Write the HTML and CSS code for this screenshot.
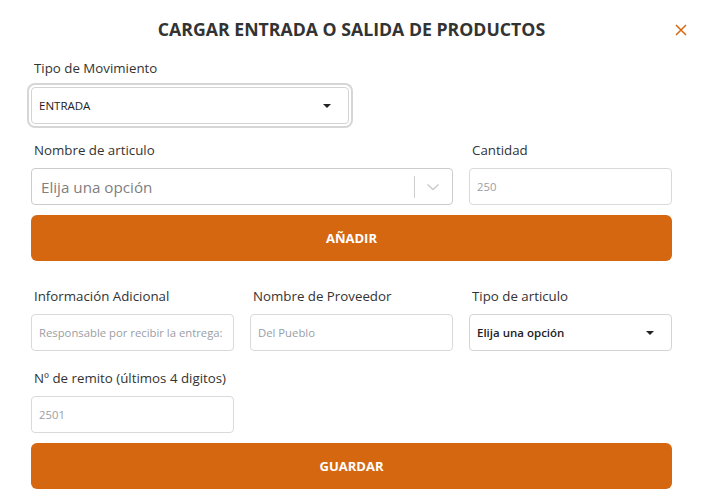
FILE: index.html
```html
<!DOCTYPE html>
<html lang="es">
<head>
    <meta charset="UTF-8">
    <meta name="viewport" content="width=device-width, initial-scale=1.0">
    <title>Cargar movimiento</title>
    <link rel="stylesheet" href="styles.css">
</head>
<body>
    <main class="modal">
        <header class="modal-header">
            <h2>CARGAR ENTRADA O SALIDA DE PRODUCTOS</h2>
            <button class="close" type="button" aria-label="Cerrar">
                <svg width="12" height="12" viewBox="0 0 12 12">
                    <path d="M1 1 L11 11 M11 1 L1 11" stroke="#d56711" stroke-width="1.5" fill="none"/>
                </svg>
            </button>
        </header>

        <form class="form">
            <div class="field mov">
                <label>Tipo de Movimiento</label>
                <div class="select focus">
                    <span>ENTRADA</span>
                    <i class="caret"></i>
                </div>
            </div>

            <div class="grid top">
                <div class="field span-2">
                    <label>Nombre de articulo</label>
                    <div class="rselect">
                        <span class="rselect-ph">Elija una opción</span>
                        <span class="rselect-sep"></span>
                        <svg class="rselect-chev" width="20" height="20" viewBox="0 0 20 20">
                            <path d="M4.5 7.5 L10 12.5 L15.5 7.5" stroke="#cccccc" stroke-width="1.6" fill="none"/>
                        </svg>
                    </div>
                </div>
                <div class="field">
                    <label>Cantidad</label>
                    <input class="input" type="text" placeholder="250">
                </div>
            </div>

            <button class="btn" type="button">AÑADIR</button>

            <div class="grid bottom">
                <div class="field">
                    <label>Información Adicional</label>
                    <input class="input" type="text" placeholder="Responsable por recibir la entrega:">
                </div>
                <div class="field">
                    <label>Nombre de Proveedor</label>
                    <input class="input" type="text" placeholder="Del Pueblo">
                </div>
                <div class="field">
                    <label>Tipo de articulo</label>
                    <div class="select">
                        <span class="strong">Elija una opción</span>
                        <i class="caret"></i>
                    </div>
                </div>
                <div class="field">
                    <label>Nº de remito (últimos 4 digitos)</label>
                    <input class="input" type="text" placeholder="2501">
                </div>
            </div>

            <button class="btn" type="button">GUARDAR</button>
        </form>
    </main>
</body>
</html>
```

FILE: styles.css
```css
*{
    box-sizing: border-box;
}
body{
    margin: 0;
    background-color: #fff;
    font-family: "Open Sans", "Liberation Sans", sans-serif;
    color: #333;
}
.modal{
    width: 702px;
    padding: 0 30px 0 31px;
}
.modal-header{
    position: relative;
    height: 58px;
    display: flex;
    justify-content: center;
    align-items: center;
}
.modal-header h2{
    margin: 0;
    font-size: 17.7px;
    font-weight: 700;
    color: #333;
}
.close{
    position: absolute;
    right: -15px;
    top: 24px;
    border: none;
    background: none;
    padding: 0;
    width: 12px;
    height: 12px;
    display: flex;
}
.form{
    display: flex;
    flex-direction: column;
}
.field{
    display: flex;
    flex-direction: column;
    gap: 8px;
}
.field label{
    font-size: 13.3px;
    line-height: 20px;
    padding-left: 3px;
    color: #333;
    white-space: nowrap;
}
.mov{
    width: 318px;
    gap: 9px;
}
.grid{
    display: grid;
    grid-template-columns: repeat(3, 1fr);
    column-gap: 16px;
    row-gap: 17px;
}
.grid.top{
    margin-top: 16px;
}
.grid.bottom{
    margin-top: 25px;
}
.span-2{
    grid-column: span 2;
}
.select{
    height: 37px;
    border: 1px solid #d4d4d4;
    border-radius: 4px;
    display: flex;
    align-items: center;
    justify-content: space-between;
    padding: 0 17px 0 7px;
    font-size: 11.5px;
    color: #222;
    background: #fff;
}
.select.focus{
    box-shadow: 0 0 0 2px #fff, 0 0 0 4px #d6d6d6;
}
.select .strong{
    font-weight: 600;
}
.caret{
    width: 0;
    height: 0;
    border-left: 4px solid transparent;
    border-right: 4px solid transparent;
    border-top: 4px solid #222;
}
.rselect{
    height: 37px;
    border: 1px solid #cccccc;
    border-radius: 4px;
    display: flex;
    align-items: center;
    padding-left: 9px;
}
.rselect-ph{
    flex: 1;
    font-size: 15.2px;
    color: #808080;
}
.rselect-sep{
    width: 1px;
    height: 22px;
    background: #cccccc;
}
.rselect-chev{
    margin: 0 9px 0 8px;
}
.input{
    height: 37px;
    border: 1px solid #d9d9d9;
    border-radius: 4px;
    padding: 0 7px;
    font-family: inherit;
    font-size: 11.3px;
    color: #333;
    width: 100%;
}
.input::placeholder{
    color: #9a9ea6;
}
.btn{
    margin-top: 10px;
    height: 46px;
    border: none;
    border-radius: 6px;
    background-color: #d56711;
    color: #fff;
    font-family: inherit;
    font-size: 13px;
    font-weight: 700;
}
```
